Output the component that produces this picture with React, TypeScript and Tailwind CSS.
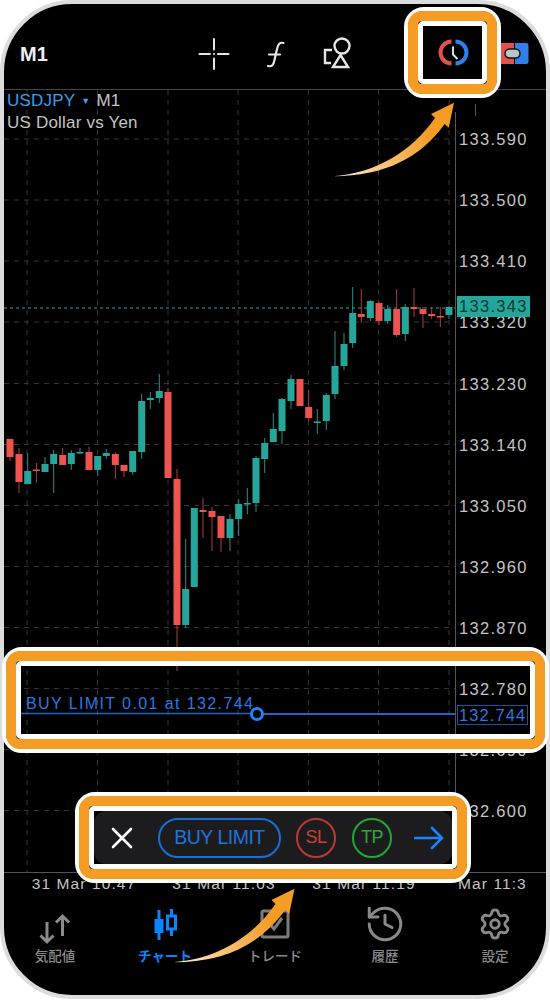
import { History, Settings } from 'lucide-react';

// x, bodyTop, bodyBottom, wickTop, wickBottom, isUp (screen coordinates)
const candles: [number, number, number, number, number, boolean][] = [
  [10, 439, 457, 439, 461, false],
  [19, 454, 482, 448, 493, false],
  [27.7, 471, 484, 453, 484, true],
  [36.4, 469.5, 471, 463, 483, false],
  [45, 464, 472, 457, 472, true],
  [53.7, 454, 464, 450, 493, true],
  [62.7, 455, 465, 448, 465, false],
  [71.3, 453, 464, 450, 470, true],
  [80, 452, 453, 448, 454, true],
  [89, 452, 470, 447, 470, false],
  [97.7, 456, 470, 456, 476, true],
  [106.3, 453, 456, 449, 459, true],
  [115.3, 454, 465, 452, 479, false],
  [124, 465, 471, 465, 477, false],
  [132.7, 451, 472, 451, 475, true],
  [141.7, 401, 452, 394, 459, true],
  [150.3, 398, 400, 392, 409, true],
  [159.3, 391, 398, 374, 403, true],
  [168, 392, 478, 388, 478, false],
  [177, 479, 625, 469, 671, false],
  [185.7, 589, 625, 539, 628, true],
  [194.3, 508, 587, 508, 587, true],
  [203, 510, 512, 498, 538, false],
  [212, 511, 517, 507, 551, false],
  [221, 516, 538, 516, 552, false],
  [230, 519, 538, 514, 551, true],
  [238.7, 504, 519, 499, 536, true],
  [247.3, 503, 504, 488, 514, true],
  [256, 458, 503, 456, 512, true],
  [264.7, 443, 459, 438, 473, true],
  [273.3, 429, 442, 413, 442, true],
  [282, 399, 431, 398, 444, true],
  [291, 379, 401, 375, 409, true],
  [300, 379, 406, 379, 406, false],
  [308.7, 407, 418, 390, 421, false],
  [317.3, 421.5, 423, 409, 434, true],
  [326.3, 395, 421, 393, 430, true],
  [335, 366, 394, 331, 399, true],
  [344, 344, 366, 333, 370, true],
  [352.7, 313, 343, 287, 348, true],
  [361.3, 314, 317, 289, 323, false],
  [370.3, 301, 318, 300, 321, true],
  [379, 303, 321, 302, 325, false],
  [387.7, 309, 321, 305, 324, true],
  [396.7, 309, 335, 289, 337, false],
  [405.3, 307, 334, 304, 341, true],
  [414, 307, 309, 288, 317, false],
  [423, 309, 314, 307, 328, false],
  [431.7, 314, 316, 307, 319, false],
  [440.3, 316, 317, 307, 327, false],
  [449, 307, 315, 306, 319, true],
];

const prices = [
  '133.590', '133.500', '133.410', '133.320', '133.230', '133.140',
  '133.050', '132.960', '132.870', '132.780', '132.690', '132.600',
];
const gridY = [139, 200, 261, 322, 383.5, 444.5, 505.5, 566.5, 627.5, 688.5, 749.5, 810.5];
const gridX = [27, 97.5, 168, 238, 308.5, 378.5, 449];
const times = ['31 Mar 10:47', '31 Mar 11:03', '31 Mar 11:19'];

function ChartCanvas() {
  return (
    <svg viewBox="4 90 451 783" className="block w-[451px] h-[783px] shrink-0">
      {gridY.map((y) => (
        <line key={y} x1="4" x2="455" y1={y} y2={y} stroke="#363636" strokeDasharray="5 5" />
      ))}
      {gridX.map((x) => (
        <line key={x} x1={x} x2={x} y1="90" y2="873" stroke="#363636" strokeDasharray="5 5" />
      ))}
      <line x1="4" x2="455" y1="308" y2="308" stroke="#26a69a" strokeDasharray="3 3" />
      {candles.map(([x, top, bottom, wickTop, wickBottom, up]) => (
        <g key={x}>
          <line x1={x} x2={x} y1={wickTop} y2={wickBottom} stroke={up ? '#2f8f86' : '#a8433f'} />
          <rect x={x - 3.5} y={top} width="7" height={Math.max(bottom - top, 1.5)} fill={up ? '#26a69a' : '#ef5350'} />
        </g>
      ))}
      <line x1="4" x2="257" y1="713.5" y2="713.5" stroke="#2a5fc0" strokeWidth="1.5" />
      <line x1="257" x2="455" y1="714" y2="714" stroke="#2a5fc0" strokeWidth="2" />
      <circle cx="257" cy="714" r="5.5" fill="#000" stroke="#1a84ff" strokeWidth="3" />
    </svg>
  );
}

function TopBar() {
  return (
    <div className="h-[86px] shrink-0 pt-[15px] flex items-center border-b border-[#444] text-white">
      <div className="w-[191px] shrink-0 pl-4 text-[20px] font-bold text-[#eee]">M1</div>
      {/* crosshair */}
      <svg viewBox="195 35 38 40" className="shrink-0 w-[38px] h-10" stroke="#e6e6e6" strokeWidth="2" strokeLinecap="round">
        <path d="M199.500 55H210M218 55H228.500M214 40V50.500M214 59.500V70" />
        <path d="M214 55h.01" />
      </svg>
      {/* function */}
      <svg viewBox="260 35 30 40" className="shrink-0 ml-[27px] w-[30px] h-10" fill="none" stroke="#e6e6e6" strokeWidth="2.200" strokeLinecap="round">
        <path d="M268 67c4 1 5.500-1 6.500-6l2.500-11c1-5 3-7 6.500-6" />
        <path d="M269 55.500h11" />
      </svg>
      {/* objects */}
      <svg viewBox="320 35 40 40" className="shrink-0 ml-[30px] w-10 h-10" fill="none" stroke="#e6e6e6" strokeWidth="2.400">
        <circle cx="342" cy="47" r="7.500" />
        <path d="M340.500 56l7.500 12h-15z" />
        <path d="M332 51h-7v13h6" />
      </svg>
      {/* order history clock */}
      <svg viewBox="436 35 34 34" className="shrink-0 ml-[76px] w-[34px] h-[34px] -mt-1" fill="none" strokeWidth="4">
        <path d="M451.500 41.500A11 11 0 0 0 451.500 63.500" stroke="#e0524a" />
        <path d="M455.500 41.500A11 11 0 0 1 455.500 63.500" stroke="#2f80ed" />
        <path d="M453 46.500v8l4.500 4.500" stroke="#dcdcdc" strokeWidth="2" />
      </svg>
      {/* connection */}
      <svg viewBox="500 40 30 25" className="shrink-0 ml-[30px] w-[30px] h-[25px] -mt-0.5">
        <rect x="500" y="42" width="14" height="21" fill="#e0524a" />
        <path d="M515 42h11a2.500 2.500 0 0 1 2.500 2.500v16a2.500 2.500 0 0 1-2.500 2.500h-11z" fill="#2f80ed" />
        <rect x="505" y="48" width="15" height="9" rx="4.500" fill="#b8c4cc" stroke="#111" strokeWidth="1.500" />
      </svg>
    </div>
  );
}

function PriceAxis() {
  return (
    <div className="relative flex-1 pt-[19px]">
      <div className="absolute left-0 top-[22px] bottom-0 w-px bg-[#555]" />
      <div className="absolute left-[20px] top-[14px] w-px h-[12px] bg-[#555]" />
      {prices.map((p) => (
        <div key={p} className="h-[61.1px] flex items-center pl-[4px] text-[16.500px] tracking-[1.300px] text-[#c4c4c4]">
          {p}
        </div>
      ))}
      {/* live price */}
      <div className="absolute left-[2px] top-[206px] w-[73px] h-[21px] bg-[#26a69a] text-[#0c3a36] text-[16.500px] tracking-[1.300px] pl-[2px] flex items-center">
        133.343
      </div>
      {/* pending order price */}
      <div className="absolute left-[2px] top-[615px] w-[71px] h-[20px] bg-black border border-[#23509c] text-[#2a78e0] text-[16.500px] tracking-[1.100px] pl-[1px] flex items-center">
        132.744
      </div>
    </div>
  );
}

function TabBar() {
  const gray = 'text-[#8a8a8a]';
  return (
    <div className="flex-1 grid grid-cols-5 -mx-1 pt-[11px]">
      <div className={`flex flex-col items-center ${gray}`}>
        <svg viewBox="37 907 36 36" className="w-9 h-9 overflow-visible" fill="none" stroke="#8a8a8a" strokeWidth="3">
          <path d="M47 923v20M40.500 936.500l6.500 6.500 6.500-6.500" />
          <path d="M62.500 937v-20M56 923.500l6.500-6.500 6.500 6.500" />
        </svg>
        <span className="mt-[5px] text-[13.500px] font-medium">気配値</span>
      </div>
      <div className="flex flex-col items-center text-[#0a84ff]">
        <svg viewBox="0 0 32 36" className="w-8 h-9" fill="none" stroke="#0a84ff">
          <path d="M10 4v30" strokeWidth="3" />
          <rect x="5.500" y="13" width="9" height="14" fill="#0a84ff" strokeWidth="0" />
          <path d="M22.500 3v27" strokeWidth="3" />
          <rect x="18.500" y="10" width="8" height="13" fill="#000" strokeWidth="3" />
        </svg>
        <span className="mt-[5px] text-[13.500px] font-bold">チャート</span>
      </div>
      <div className={`flex flex-col items-center ${gray}`}>
        <svg viewBox="0 0 36 36" className="w-9 h-9" fill="none" stroke="#7c7c7c" strokeWidth="3">
          <rect x="5" y="5" width="26" height="26" rx="1.500" />
          <path d="M12 17l5 6 8-11" />
        </svg>
        <span className="mt-[5px] text-[13.500px] font-medium">トレード</span>
      </div>
      <div className={`flex flex-col items-center ${gray}`}>
        <History strokeWidth={1.700} className="w-[42px] h-[42px] -my-[3px]" />
        <span className="mt-[5px] text-[13.500px] font-medium">履歴</span>
      </div>
      <div className={`flex flex-col items-center ${gray}`}>
        <Settings strokeWidth={2} className="w-[34px] h-9" />
        <span className="mt-[5px] text-[13.500px] font-medium">設定</span>
      </div>
    </div>
  );
}

function OrderToolbar() {
  return (
    <div className="absolute left-[75px] top-[792px] w-[396px] h-[91px] border-4 border-white rounded-[20px]">
      <div className="w-full h-full border-[10px] border-[#f49c23] rounded-[14px]">
        <div className="w-full h-full border-[5px] border-white rounded-[5px] bg-black">
          <div className="h-full bg-[#1c1c1e] rounded-[12px] flex items-center">
            <svg viewBox="0 0 24 24" className="shrink-0 ml-[16px] w-6 h-6" stroke="#fff" strokeWidth="2.600" strokeLinecap="round">
              <path d="M3 3l18 18M21 3L3 21" />
            </svg>
            <div className="shrink-0 ml-[24px] w-[123px] h-[40px] rounded-full border-2 border-[#1a6fd6] flex items-center justify-center text-[#1f74dc] text-[19.500px] tracking-[-0.500px]">
              BUY LIMIT
            </div>
            <div className="shrink-0 ml-[15px] w-[40px] h-[40px] rounded-full border-2 border-[#b93a34] flex items-center justify-center text-[#cf3f38] text-[18px] tracking-[-0.500px]">
              SL
            </div>
            <div className="shrink-0 ml-[16px] w-[40px] h-[40px] rounded-full border-2 border-[#22a835] flex items-center justify-center text-[#27ad3a] text-[18px] tracking-[-0.500px]">
              TP
            </div>
            <svg viewBox="0 0 30 24" className="shrink-0 ml-[22px] w-[30px] h-6" fill="none" stroke="#1a84ff" strokeWidth="2.600" strokeLinecap="round">
              <path d="M1 12h27M18 2l10 10-10 10" />
            </svg>
          </div>
        </div>
      </div>
    </div>
  );
}

export default function App() {
  return (
    <div className="relative w-[550px] h-[1000px] bg-white overflow-hidden font-['Liberation_Sans','Noto_Sans_CJK_JP',sans-serif]">
      <div className="w-[550px] h-[999px] border-4 border-[#dcdcdc] rounded-[72px] bg-black overflow-hidden flex flex-col">
        <TopBar />

        <div className="relative flex h-[783px] shrink-0 border-b border-[#555]">
          <ChartCanvas />
          <PriceAxis />
          <div className="absolute left-[3px] top-0 text-[17px] tracking-[0.200px] leading-[22px] text-[#c4c4c4]">
            <div className="flex items-center">
              <span className="text-[#3b9fe8]">USDJPY</span>
              <span className="ml-[6px] text-[9px] text-[#3b9fe8]">▼</span>
              <span className="ml-[6px]">M1</span>
            </div>
            <div>US Dollar vs Yen</div>
          </div>
          <div className="absolute left-[22px] top-[602px] text-[16px] tracking-[1.400px] whitespace-nowrap text-[#2a78e0]">
            BUY LIMIT 0.01 at 132.744
          </div>
        </div>

        <div className="flex pl-[10px] h-[22px] shrink-0 items-center text-[15.500px] tracking-[1.100px] text-[#c4c4c4]">
          {times.map((t) => (
            <div key={t} className="w-[140px] shrink-0 text-center whitespace-nowrap">
              {t}
            </div>
          ))}
          <div className="ml-[24px] shrink-0 whitespace-nowrap">Mar 11:3</div>
        </div>

        <TabBar />
      </div>

      {/* clock button callout */}
      <div className="absolute left-[404px] top-[7px] w-[97px] h-[91px] border-4 border-white rounded-[20px]">
        <div className="w-full h-full border-[10px] border-[#f49c23] rounded-[14px]">
          <div className="w-full h-full border-[5px] border-white rounded-[5px]" />
        </div>
      </div>

      {/* pending order callout */}
      <div className="absolute left-[2px] top-[647px] w-[547px] h-[106px] border-4 border-white rounded-[20px]">
        <div className="w-full h-full border-[10px] border-[#f49c23] rounded-[14px]">
          <div className="w-full h-full border-[5px] border-white rounded-[5px]" />
        </div>
      </div>

      <OrderToolbar />

      {/* curved arrows */}
      <svg viewBox="0 0 550 1000" className="absolute left-0 top-0 w-[550px] h-[1000px] pointer-events-none">
        <defs>
          <linearGradient id="arrowFade" gradientUnits="userSpaceOnUse" x1="333" y1="176" x2="440" y2="115">
            <stop offset="0" stopColor="#fff4e2" />
            <stop offset="0.35" stopColor="#f9c77f" />
            <stop offset="0.85" stopColor="#f49c23" />
          </linearGradient>
          <path id="curveArrow" d="M332.700 176.300C377 173 412 151 435 118L431 114L454 102.700L448.700 127.700L444.700 124C420 158 385 176 332.700 176.300Z" fill="url(#arrowFade)" />
        </defs>
        <use href="#curveArrow" />
        <use href="#curveArrow" transform="translate(-159.500 786)" />
      </svg>
    </div>
  );
}
